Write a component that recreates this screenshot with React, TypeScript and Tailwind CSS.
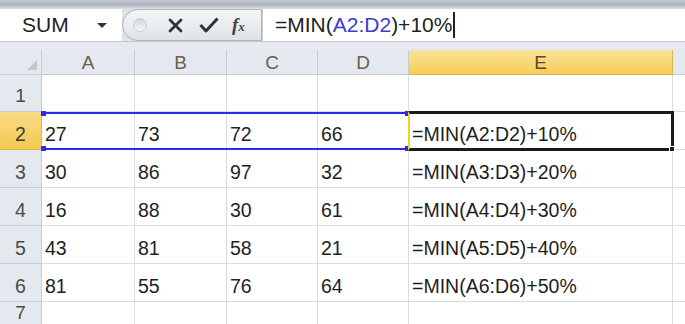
import React from "react";

const rows: { n: number; vals: string[]; f: string }[] = [
  { n: 2, vals: ["27", "73", "72", "66"], f: "=MIN(A2:D2)+10%" },
  { n: 3, vals: ["30", "86", "97", "32"], f: "=MIN(A3:D3)+20%" },
  { n: 4, vals: ["16", "88", "30", "61"], f: "=MIN(A4:D4)+30%" },
  { n: 5, vals: ["43", "81", "58", "21"], f: "=MIN(A5:D5)+40%" },
  { n: 6, vals: ["81", "55", "76", "64"], f: "=MIN(A6:D6)+50%" },
];

const cols = ["A", "B", "C", "D"];

const grid = "grid grid-cols-[42px_93px_92px_91px_91px_264px_1fr]";

function FormulaBar() {
  return (
    <div className="flex flex-col">
      <div className="h-[9px] bg-gradient-to-b from-[#c4c9d1] via-[#aeb5c0] to-[#dde1e6]" />
      <div className="flex h-[32px] bg-[#dfe3e8]">
        <div className="flex w-[122px] items-center justify-between bg-white pl-[22px] pr-[15px] text-[21px] text-[#222]">
          <span>SUM</span>
          <span className="h-0 w-0 border-x-[5px] border-t-[5px] border-x-transparent border-t-[#333]" />
        </div>
        <div className="flex w-[140px] items-center rounded-l-[16px] border border-[#aeb5bf] bg-gradient-to-b from-[#f4f6f8] to-[#dfe3e9] pl-[10px]">
          <span className="h-[14px] w-[14px] rounded-full border border-[#cdd1d6] bg-gradient-to-b from-[#d2d6dc] to-[#f7f8fa]" />
          <svg className="ml-[21px]" width="15" height="15" viewBox="0 0 15 15">
            <path d="M2 2 L13 13 M13 2 L2 13" stroke="#333" strokeWidth="2.8" strokeLinecap="round" />
          </svg>
          <svg className="ml-[16px]" width="20" height="16" viewBox="0 0 20 16">
            <path d="M1.5 8 L7 14 L18.5 1.5" stroke="#333" strokeWidth="3" fill="none" strokeLinejoin="round" />
          </svg>
          <span className="ml-[13px] font-['Liberation_Serif',serif] text-[19px] font-bold italic text-[#444]">
            f<span className="text-[13px]">x</span>
          </span>
        </div>
        <div className="flex flex-1 items-center border-l border-[#c8cdd4] bg-white pl-[12px] text-[21px] text-[#222]">
          <span>=MIN(</span>
          <span className="text-[#3c3cd0]">A2:D2</span>
          <span>)+10%</span>
          <span className="ml-[1px] h-[26px] w-[1.5px] bg-[#222]" />
        </div>
      </div>
      <div className="h-[9px] border-t border-[#c3c9d1] bg-[#e6e9ed]" />
    </div>
  );
}

function RowHead({ n, active }: { n: number; active?: boolean }) {
  return (
    <div
      className={
        active
          ? "flex items-end justify-center border-b border-r border-[#e0b24a] bg-gradient-to-b from-[#f9dc86] to-[#f4c94f] pb-[4px] text-[#3b3b3b]"
          : "flex items-end justify-center border-b border-r border-[#c5cdd8] bg-[#e4e9ef] pb-[4px] text-[#4a4a4a]"
      }
    >
      {n}
    </div>
  );
}

export default function App() {
  return (
    <div className="h-[324px] w-[685px] overflow-hidden bg-white font-['Liberation_Sans',Arial,sans-serif]">
      <FormulaBar />
      <div className="relative">
        <div className={`${grid} h-[25px] text-[19px] leading-none`}>
          <div className="relative border-b border-r border-[#c5cdd8] bg-[#e4e9ef]">
            <span className="absolute bottom-[4px] right-[4px] h-0 w-0 border-l-[10px] border-l-transparent [border-bottom:10px_solid_#c2c8d0]" />
          </div>
          {cols.map((c) => (
            <div key={c} className="flex items-center justify-center border-b border-r border-[#c5cdd8] bg-[#e4e9ef] text-[#6b5f4a]">
              {c}
            </div>
          ))}
          <div className="flex items-center justify-center border-b border-r border-[#e0b24a] bg-gradient-to-b from-[#fbe39a] to-[#f6cd55] text-[#5a4a2a]">
            E
          </div>
          <div className="border-b border-[#c5cdd8] bg-[#e4e9ef]" />
        </div>

        <div className={`${grid} h-[37px] text-[19px] leading-[22px]`}>
          <RowHead n={1} />
          {[0, 1, 2, 3, 4].map((i) => (
            <div key={i} className="border-b border-r border-[#dadcdf]" />
          ))}
          <div className="border-b border-[#dadcdf]" />
        </div>

        {rows.map((r) => (
          <div key={r.n} className={`${grid} h-[38px] text-[19.5px] leading-[22px] text-[#1e1e1e]`}>
            <RowHead n={r.n} active={r.n === 2} />
            {r.vals.map((v, i) => (
              <div key={i} className="flex items-end border-b border-r border-[#dadcdf] pb-[4px] pl-[3px]">
                {v}
              </div>
            ))}
            <div className="flex items-end border-b border-r border-[#dadcdf] pb-[4px] pl-[3px]">{r.f}</div>
            <div className="border-b border-[#dadcdf]" />
          </div>
        ))}

        <div className={`${grid} h-[38px] text-[19px] leading-[22px]`}>
          <div className="flex items-start justify-center border-r border-[#c5cdd8] bg-[#e4e9ef] text-[#4a4a4a]">
            7
          </div>
          {[0, 1, 2, 3, 4].map((i) => (
            <div key={i} className="border-r border-[#dadcdf]" />
          ))}
          <div />
        </div>

        {/* reference range A2:D2 */}
        <div className="pointer-events-none absolute left-[43px] top-[62px] h-[38px] w-[365px] border-y-2 border-[#2a2ae8]">
          <span className="absolute -left-[2px] -top-[3px] h-[5px] w-[5px] bg-[#2a2ae8]" />
          <span className="absolute -bottom-[3px] -left-[2px] h-[5px] w-[5px] bg-[#2a2ae8]" />
          <span className="absolute -right-[2px] -top-[3px] h-[5px] w-[5px] bg-[#2a2ae8]" />
          <span className="absolute -bottom-[3px] -right-[2px] h-[5px] w-[5px] bg-[#2a2ae8]" />
        </div>
        {/* active cell E2 */}
        <div className="pointer-events-none absolute left-[408px] top-[61px] h-[40px] w-[266px] border-[3px] border-l-2 border-[#1a1a1a] border-l-[#e8d42a]">
          <span className="absolute -bottom-[4px] -right-[4px] h-[6px] w-[6px] border border-white bg-[#1a1a1a]" />
        </div>
      </div>
    </div>
  );
}
